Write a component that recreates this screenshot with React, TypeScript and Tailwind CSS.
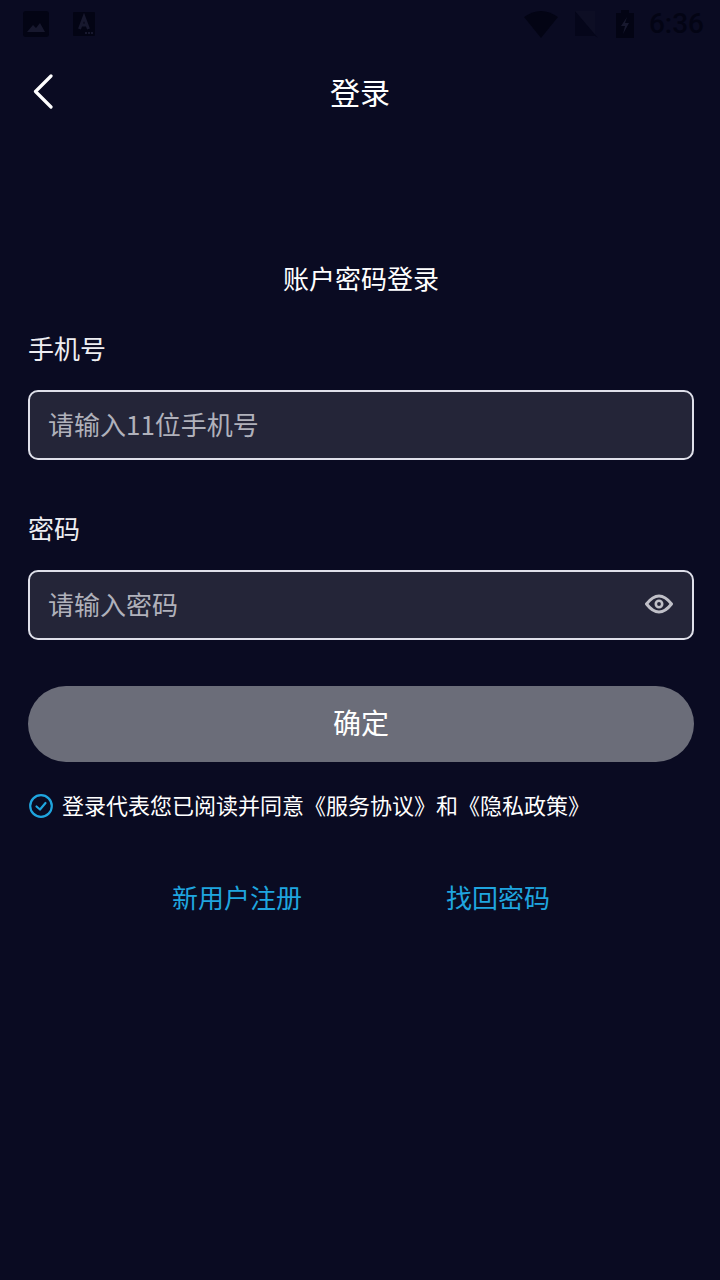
export default function App() {
  const font = { fontFamily: '"Noto Sans CJK SC", sans-serif' };
  return (
    <div className="w-[720px] h-[1280px] bg-[#0a0b22] text-white flex flex-col overflow-hidden" style={font}>
      <div className="h-12 flex items-center pl-[23px] pr-[16px] text-[#030414]">
        <svg width="26" height="26" viewBox="0 0 26 26" className="mr-[24px]">
          <rect width="26" height="26" rx="3" fill="currentColor" />
          <path d="M4 21 L10 14 L13 17 L17 12 L22 21 Z" fill="#17182e" />
        </svg>
        <svg width="22" height="24" viewBox="0 0 22 24">
          <rect width="22" height="24" rx="1" fill="currentColor" />
          <path d="M6.5 17 L11 5 L15.5 17 M8 13 H14" stroke="#17182e" strokeWidth="3" fill="none" />
          <path d="M12 20h2v2h-2zM15 20h2v2h-2zM18 20h2v2h-2z" fill="#17182e" />
        </svg>
        <div className="flex-1" />
        <svg width="34" height="28" viewBox="0 0 34 28" className="mr-[16px]">
          <path d="M0 7 Q17 -5 34 7 L17 28 Z" fill="currentColor" />
        </svg>
        <svg width="24" height="28" viewBox="0 0 24 28" className="mr-[17px]">
          <rect x="1" y="1" width="20" height="25" fill="#0d0e24" />
          <path d="M1 1 L24 28 L21 26 H1 Z" fill="#05061a" />
        </svg>
        <svg width="20" height="28" viewBox="0 0 20 28" className="mr-[14px]">
          <path d="M6 0 H14 V3 H19 V28 H1 V3 H6 Z" fill="currentColor" />
          <path d="M12 7 L6 16 H10 L8 24 L14 13 H10 Z" fill="#17182e" />
        </svg>
        <span className="text-[28px] leading-none font-medium" style={{ fontFamily: 'Roboto, sans-serif' }}>6:36</span>
      </div>

      <div className="h-[88px] relative flex items-center justify-center">
        <svg width="24" height="36" viewBox="0 0 24 36" className="absolute left-[32px] top-[26px]">
          <path d="M19 2 L3.5 17.5 L19 33" stroke="#fff" strokeWidth="3.2" strokeLinecap="round" strokeLinejoin="round" fill="none" />
        </svg>
        <span className="text-[30px] leading-[44px] -mt-[2px]">登录</span>
      </div>

      <div className="mt-[120px] pl-[2px] text-center text-[26px] leading-[44px]">账户密码登录</div>

      <div className="px-[28px] pr-[26px] flex flex-col">
        <div className="mt-[26px] text-[26px] leading-[44px] text-[#eeeef2]">手机号</div>
        <div className="mt-[20px] h-[70px] rounded-[10px] border-2 border-[#dfe0ea] bg-[#242538] flex items-center pl-[18px]">
          <span className="text-[26px] leading-[44px] text-[#b0b1bb] -mt-[3px]">请输入11位手机号</span>
        </div>

        <div className="mt-[46px] text-[26px] leading-[44px] text-[#eeeef2]">密码</div>
        <div className="mt-[20px] h-[70px] rounded-[10px] border-2 border-[#dfe0ea] bg-[#242538] flex items-center justify-between pl-[18px] pr-[19px]">
          <span className="text-[26px] leading-[44px] text-[#b0b1bb] -mt-[3px]">请输入密码</span>
          <svg width="28" height="20" viewBox="0 0 28 20" className="-mt-[2px]">
            <path d="M1.5 10 Q14 -6 26.5 10 Q14 26 1.5 10 Z" fill="none" stroke="#c0c0c8" strokeWidth="3" strokeLinejoin="round" />
            <circle cx="14" cy="10" r="3.2" fill="none" stroke="#c0c0c8" strokeWidth="2.6" />
          </svg>
        </div>

        <button className="mt-[46px] h-[76px] rounded-[38px] bg-[#6b6d79] text-[28px] text-white flex items-center justify-center pb-[4px]">确定</button>

        <div className="mt-[20px] flex items-center h-[44px]">
          <svg width="24" height="24" viewBox="0 0 24 24" className="ml-[1px] mr-[9px] mt-[4px]">
            <circle cx="12" cy="12" r="10.8" fill="none" stroke="#1fa5df" strokeWidth="2.2" />
            <path d="M7.5 12.5 L11 15.5 L16.5 9" fill="none" stroke="#1fa5df" strokeWidth="2.2" strokeLinecap="round" strokeLinejoin="round" />
          </svg>
          <span className="text-[22px] leading-[44px] text-white whitespace-nowrap">登录代表您已阅读并同意《服务协议》和《隐私政策》</span>
        </div>

        <div className="mt-[49px] flex text-[26px] leading-[44px] text-[#1fa5df]">
          <span className="ml-[144px]">新用户注册</span>
          <span className="ml-[144px]">找回密码</span>
        </div>
      </div>
    </div>
  );
}
